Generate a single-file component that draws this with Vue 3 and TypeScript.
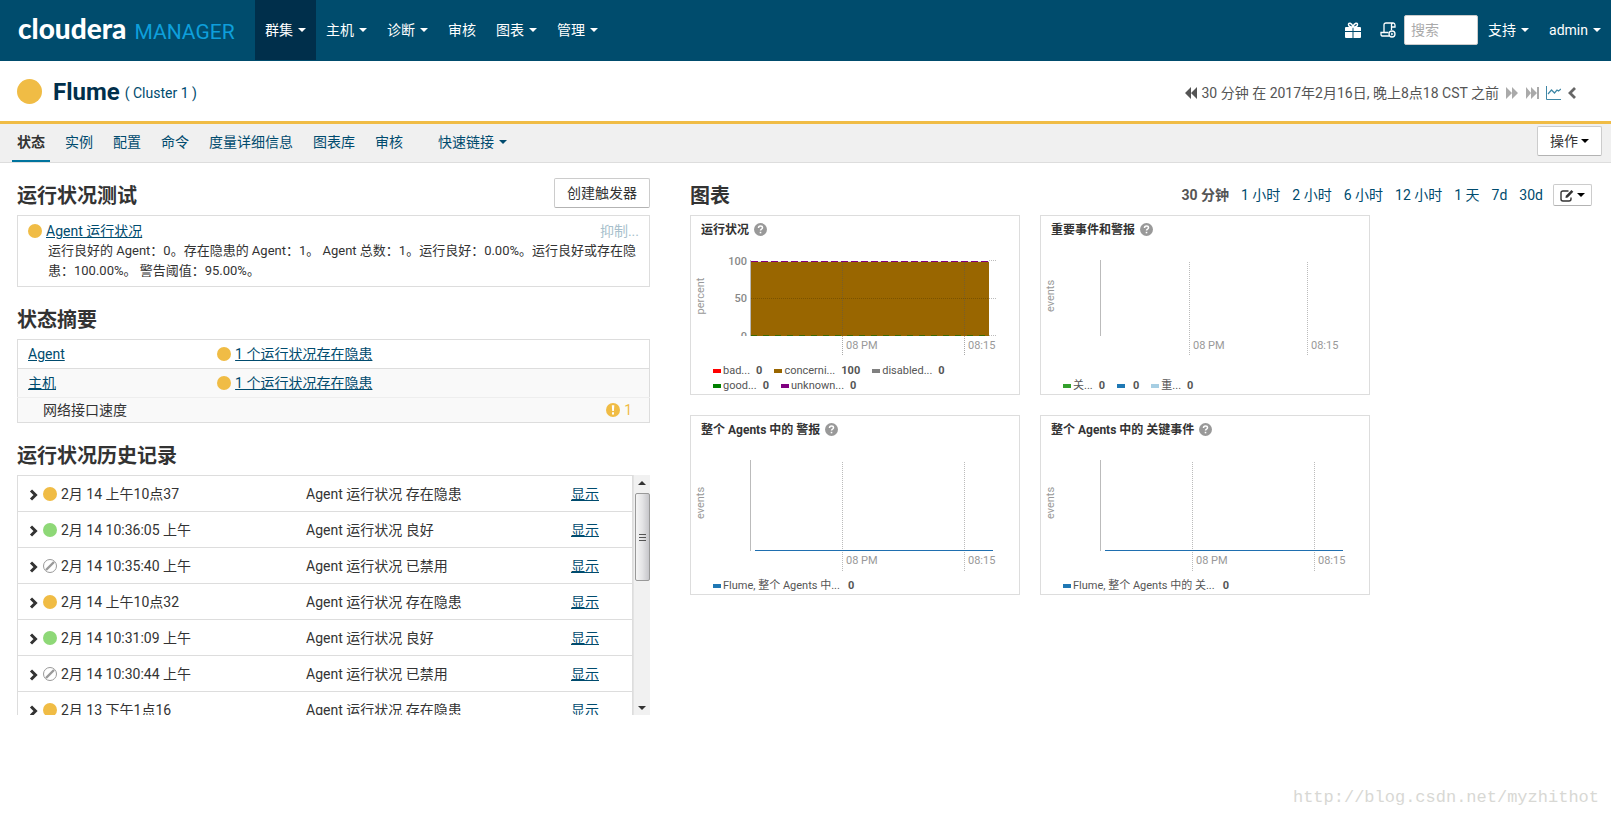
<script setup lang="ts">
interface NavItem { label: string; menu: boolean; active?: boolean }
interface HistoryRow { state: 'warn' | 'good' | 'off'; time: string; text: string }
interface Series { color: string; name: string; value: string }
interface Chart {
  title: string
  unit: string
  bottom: number
  ticks: [number, number]
  area: boolean
  line: boolean
  legend: Series[][]
}

const nav: NavItem[] = [
  { label: '群集', menu: true, active: true },
  { label: '主机', menu: true },
  { label: '诊断', menu: true },
  { label: '审核', menu: false },
  { label: '图表', menu: true },
  { label: '管理', menu: true },
]
const tabs: string[] = ['状态', '实例', '配置', '命令', '度量详细信息', '图表库', '审核']
const ranges: string[] = ['30 分钟', '1 小时', '2 小时', '6 小时', '12 小时', '1 天', '7d', '30d']
const summary: string[] = ['Agent', '主机']
const history: HistoryRow[] = [
  { state: 'warn', time: '2月 14 上午10点37', text: 'Agent 运行状况 存在隐患' },
  { state: 'good', time: '2月 14 10:36:05 上午', text: 'Agent 运行状况 良好' },
  { state: 'off', time: '2月 14 10:35:40 上午', text: 'Agent 运行状况 已禁用' },
  { state: 'warn', time: '2月 14 上午10点32', text: 'Agent 运行状况 存在隐患' },
  { state: 'good', time: '2月 14 10:31:09 上午', text: 'Agent 运行状况 良好' },
  { state: 'off', time: '2月 14 10:30:44 上午', text: 'Agent 运行状况 已禁用' },
  { state: 'warn', time: '2月 13 下午1点16', text: 'Agent 运行状况 存在隐患' },
]
const charts: Chart[] = [
  {
    title: '运行状况', unit: 'percent', bottom: 120, ticks: [152, 274], area: true, line: false,
    legend: [
      [
        { color: '#ff0000', name: 'bad...', value: '0' },
        { color: '#996600', name: 'concerni...', value: '100' },
        { color: '#808080', name: 'disabled...', value: '0' },
      ],
      [
        { color: '#008000', name: 'good...', value: '0' },
        { color: '#800080', name: 'unknown...', value: '0' },
      ],
    ],
  },
  {
    title: '重要事件和警报', unit: 'events', bottom: 120, ticks: [149, 267], area: false, line: false,
    legend: [[
      { color: '#33a02c', name: '关...', value: '0' },
      { color: '#1f78b4', name: '', value: '0' },
      { color: '#a6cee3', name: '重...', value: '0' },
    ]],
  },
  {
    title: '整个 Agents 中的 警报', unit: 'events', bottom: 135, ticks: [152, 274], area: false, line: true,
    legend: [[{ color: '#1f78b4', name: 'Flume, 整个 Agents 中...', value: '0' }]],
  },
  {
    title: '整个 Agents 中的 关键事件', unit: 'events', bottom: 135, ticks: [152, 274], area: false, line: true,
    legend: [[{ color: '#1f78b4', name: 'Flume, 整个 Agents 中的 关...', value: '0' }]],
  },
]
</script>

<template>
  <div class="page">
    <header class="topbar">
      <a href="#" class="logo"><span class="brand">cloudera</span><span class="product">MANAGER</span></a>
      <nav class="nav">
        <a v-for="n in nav" :key="n.label" href="#" class="nav-item" :class="{ active: n.active }">
          {{ n.label }}<i v-if="n.menu" class="caret"></i>
        </a>
      </nav>
      <div class="tools">
        <button class="icon-btn" aria-label="新增功能">
          <svg width="16" height="16" viewBox="0 0 16 16">
            <path d="M1 5h6.500v4H0V6q0-1 1-1zM8.500 5H15q1 0 1 1v3H8.500zM0 10h7.500v6H1q-1 0-1-1zM8.500 10H16v5q0 1-1 1H8.500z" fill="#fff" />
            <path d="M8 5C6 5 3.500 4.500 3.500 2.500S6.500.5 8 4.500C9.500.5 12.500.5 12.500 2.500S10 5 8 5z" fill="none" stroke="#fff" stroke-width="1.500" />
          </svg>
        </button>
        <button class="icon-btn" aria-label="运行命令">
          <svg width="16" height="16" viewBox="0 0 16 16" fill="none" stroke="#fff" stroke-width="1.300">
            <path d="M4 10.500V3q0-2 2-2h7.500M11.500 8V3q0-2 1.700-2T15 3v2h-3.500M9 14H3q-2 0-2-1.500v-2h7.500" />
            <circle cx="12" cy="12" r="3" />
            <path d="M11.200 10.500v3l2.300-1.500z" fill="#fff" stroke="none" />
          </svg>
        </button>
        <input class="search" type="text" placeholder="搜索" aria-label="搜索">
        <a href="#" class="nav-item">支持<i class="caret"></i></a>
        <a href="#" class="nav-item">admin<i class="caret"></i></a>
      </div>
    </header>

    <section class="titlebar">
      <span class="dot big"></span>
      <h1>Flume</h1>
      <a href="#" class="cluster">( Cluster 1 )</a>
      <div class="time">
        <button class="bare" aria-label="后退">
          <svg width="12" height="12" viewBox="0 0 12 12"><path d="M6 0v12L0 6zM12 0v12L6 6z" fill="#555" /></svg>
        </button>
        <span class="time-text">30 分钟 在 2017年2月16日, 晚上8点18 CST 之前</span>
        <button class="bare" aria-label="前进">
          <svg width="12" height="12" viewBox="0 0 12 12"><path d="M0 0v12l6-6zM6 0v12l6-6z" fill="#aaa" /></svg>
        </button>
        <button class="bare now" aria-label="现在">
          <svg width="13" height="12" viewBox="0 0 13 12"><path d="M0 0v12l5-6zM5 0v12l6-6zM11 0h2v12h-2z" fill="#aaa" /></svg>
        </button>
        <button class="bare" aria-label="图表">
          <svg width="15" height="14" viewBox="0 0 15 14" fill="none" stroke="#3f87a6"><path d="M.5 0v13.500H15" /><path d="M2 8l3.500-4 3 3 2.500-3 1.500 1L15 3" stroke-width="1.200" /></svg>
        </button>
        <button class="bare" aria-label="收起">
          <svg width="8" height="12" viewBox="0 0 8 12"><path d="M7 1L2 6l5 5" fill="none" stroke="#666" stroke-width="2.800" /></svg>
        </button>
      </div>
    </section>

    <section class="tabbar">
      <nav class="tabs">
        <a v-for="(t, i) in tabs" :key="t + i" href="#" class="tab" :class="{ on: i === 0 }">{{ t }}</a>
        <a href="#" class="tab quick">快速链接<i class="caret"></i></a>
      </nav>
      <button class="btn">操作<i class="caret dark"></i></button>
    </section>

    <main class="main">
      <div class="left">
        <div class="head">
          <h2>运行状况测试</h2>
          <button class="btn">创建触发器</button>
        </div>
        <div class="panel test">
          <div class="test-top">
            <span class="dot"></span><a href="#" class="link">Agent 运行状况</a>
            <a href="#" class="suppress">抑制...</a>
          </div>
          <p>运行良好的 Agent：0。存在隐患的 Agent：1。 Agent 总数：1。运行良好：0.00%。运行良好或存在隐患：100.00%。 警告阈值：95.00%。</p>
        </div>

        <div class="head"><h2>状态摘要</h2></div>
        <table class="panel summary">
          <tbody>
            <tr v-for="s in summary" :key="s">
              <td class="role"><a href="#" class="link">{{ s }}</a></td>
              <td><span class="cell"><span class="dot"></span><a href="#" class="link">1 个运行状况存在隐患</a></span></td>
            </tr>
            <tr class="sub">
              <td class="indent">网络接口速度</td>
              <td>
                <span class="cell alert">
                  <svg width="14" height="14" viewBox="0 0 14 14"><circle cx="7" cy="7" r="7" fill="#f0bc45" /><path d="M5.800 2.200h2.500L7.900 8H6.200zM6 9.200h2v2.200H6z" fill="#fff" /></svg>
                  1
                </span>
              </td>
            </tr>
          </tbody>
        </table>

        <div class="head"><h2>运行状况历史记录</h2></div>
        <div class="history">
          <div class="rows">
            <div v-for="(h, i) in history" :key="i" class="row">
              <button class="bare" aria-label="展开">
                <svg width="9" height="12" viewBox="0 0 9 12"><path d="M2 1.500L6.500 6 2 10.500" fill="none" stroke="#333" stroke-width="3" /></svg>
              </button>
              <svg v-if="h.state === 'off'" class="off" width="14" height="14" viewBox="0 0 14 14" fill="none" stroke="#999"><circle cx="7" cy="7" r="6.500" /><path d="M3 11l8-8" stroke-width="2.400" /></svg>
              <span v-else class="dot" :class="h.state"></span>
              <span class="when">{{ h.time }}</span>
              <span class="what">{{ h.text }}</span>
              <a href="#" class="link">显示</a>
            </div>
          </div>
          <div class="scroll" aria-hidden="true">
            <i class="arrow up"></i>
            <span class="thumb"><i></i><i></i><i></i></span>
            <i class="arrow down"></i>
          </div>
        </div>
      </div>

      <div class="right">
        <div class="head">
          <h2>图表</h2>
          <nav class="ranges">
            <a v-for="(r, i) in ranges" :key="r" href="#" :class="{ on: i === 0 }">{{ r }}</a>
            <button class="btn edit" aria-label="编辑">
              <svg width="14" height="13" viewBox="0 0 14 13" fill="none" stroke="#333"><path d="M8.500 2H3Q1 2 1 4v6q0 2 2 2h6q2 0 2-2V8.500" stroke-width="1.400" /><path d="M5.500 9l.3-2.300L11.500 1 13.300 2.800 7.800 8.500z" fill="#333" stroke="none" /></svg>
              <i class="caret dark"></i>
            </button>
          </nav>
        </div>
        <div class="charts">
          <article v-for="c in charts" :key="c.title" class="chart">
            <h3>{{ c.title }}
              <svg width="13" height="13" viewBox="0 0 13 13"><circle cx="6.500" cy="6.500" r="6.500" fill="#999" /><path d="M4.500 5q0-2 2-2t2 1.700q0 .8-1 1.400t-1 1.400" fill="none" stroke="#fff" stroke-width="1.500" /><path d="M5.700 8.800h1.600v1.500H5.700z" fill="#fff" /></svg>
            </h3>
            <svg class="plot" width="328" height="128" viewBox="1 30 328 128">
              <text class="unit" transform="rotate(-90)" :x="c.bottom === 120 ? -81 : -88" y="14" text-anchor="middle">{{ c.unit }}</text>
              <template v-if="c.area">
                <clipPath id="scale"><path d="M0 30h61v91H0z" /></clipPath>
                <g class="scale" text-anchor="end" clip-path="url(#scale)">
                  <text x="57" y="50">100</text><text x="57" y="87">50</text><text x="57" y="125">0</text>
                </g>
                <path d="M61 46h238v75H61z" fill="#960" />
                <path d="M299 45.500h7M299 83.500h7M299 120.500h7" class="grid" />
                <path d="M61 83.500h238" stroke="#7a5200" stroke-dasharray="1 1" />
                <path d="M61 120.500h238" stroke="#3a6b00" stroke-dasharray="6 6" />
                <path d="M61 46.500h238" stroke="#ddd" />
                <path d="M61 46.500h238" stroke="#800080" stroke-dasharray="7 3" />
              </template>
              <path :d="`M60.500 45V${c.bottom + 1}`" stroke="#bbb" />
              <g v-for="(x, i) in c.ticks" :key="x">
                <path :d="`M${x + 0.5} 47V${c.bottom + 21}`" class="grid" :class="{ over: c.area }" />
                <text class="tick" :x="x + 4" :y="c.bottom + 14">{{ i === 0 ? '08 PM' : '08:15' }}</text>
              </g>
              <path v-if="c.line" d="M65 135.500H303" stroke="#1f6fb0" />
            </svg>
            <div class="legend" :class="{ single: c.line }">
              <div v-for="(l, i) in c.legend" :key="i" class="legend-row">
                <span v-for="(s, j) in l" :key="j" class="series">
                  <i class="swatch" :style="{ background: s.color }"></i><span>{{ s.name }}</span><b>{{ s.value }}</b>
                </span>
              </div>
            </div>
          </article>
        </div>
      </div>
    </main>
    <div class="watermark">http://blog.csdn.net/myzhithot</div>
  </div>
</template>

<style>
body { margin: 0; background: #fff; }
</style>

<style scoped>
* { box-sizing: border-box; }
.page {
  position: relative;
  min-height: 100vh;
  font: 14px/20px Roboto, "Noto Sans CJK SC", sans-serif;
  color: #333;
}
a { color: #004b6e; text-decoration: none; }
button, input { font: inherit; color: inherit; margin: 0; }
button { cursor: pointer; }
h1, h2, h3, p { margin: 0; }
.caret {
  display: inline-block;
  border: 4px solid transparent;
  border-top-color: currentColor;
  border-bottom: 0;
  margin-left: 5px;
  vertical-align: 3px;
}
.caret.dark { margin-left: 3px; color: #000; }
.bare { display: flex; padding: 0; border: 0; background: none; }
.dot { flex: none; width: 14px; height: 14px; border-radius: 50%; background: #f0bc45; }
.dot.good { background: #8ed877; }
.dot.big { width: 25px; height: 25px; }
.link { text-decoration: underline; }
.btn {
  height: 30px;
  padding: 0 12px;
  border: 1px solid #bbb;
  border-color: #ccc #ccc #b3b3b3;
  border-radius: 2px;
  background: #fff;
  white-space: nowrap;
}

.topbar { display: flex; align-items: flex-start; height: 61px; background: #004c6d; }
.logo { display: flex; align-items: baseline; gap: 8px; flex: none; width: 255px; padding: 12px 0 0 18px; line-height: 32px; }
.brand { font-family: Lato, sans-serif; font-size: 28px; font-weight: 900; color: #fff; }
.product { font-size: 21px; color: #0e9fdb; }
.nav { display: flex; }
.nav-item { padding: 20px 10px; line-height: 20px; color: #fff; white-space: nowrap; }
.nav-item.active { background: #002f4b; }
.tools { display: flex; align-items: center; margin-left: auto; }
.icon-btn { display: flex; margin-right: 19px; padding: 0; border: 0; background: none; }
.icon-btn + .icon-btn { margin-right: 8px; }
.search { width: 74px; height: 30px; padding: 0 6px; border: 1px solid #ccc; border-radius: 2px; background: #fff; }
.search::placeholder { color: #aaa; opacity: 1; }

.titlebar { display: flex; align-items: center; height: 63px; padding: 0 35px 0 17px; border-bottom: 3px solid #f0bc45; }
h1 { margin-left: 11px; padding-top: 2px; font-size: 24px; font-weight: 700; line-height: 28px; color: #002f4b; }
.cluster { margin: 4px 0 0 5px; }
.time { display: flex; align-items: center; gap: 7px; margin-left: auto; padding-top: 4px; color: #555; }
.time-text { margin-left: -3px; }
.now { margin: 0 0 0 1px; }

.tabbar { display: flex; justify-content: space-between; align-items: flex-start; height: 39px; padding: 0 9px 0 12px; background: #f0f0f0; border-bottom: 1px solid #ddd; }
.tabbar .btn { margin-top: 2px; }
.tabs { display: flex; gap: 10px; }
.tab { padding: 8px 5px; border-bottom: 2px solid transparent; }
.tab.on { font-weight: 700; color: #333; border-color: #00749e; }
.quick { margin-left: 15px; }

.main { display: grid; grid-template-columns: 633fr 902fr; gap: 40px; padding: 12px 19px 0 17px; }
.left, .right { min-width: 0; }
.head { display: flex; align-items: center; justify-content: space-between; height: 40px; }
.head .btn { margin-bottom: 4px; }
h2 { padding-top: 2px; font-size: 20px; font-weight: 700; line-height: 24px; }
.panel { border: 1px solid #ddd; background: #fff; }
.test { padding: 5px 10px; margin-bottom: 12px; }
.test-top { display: flex; align-items: center; gap: 4px; }
.suppress { margin-left: auto; color: #a8bfcc; }
.test p { padding-left: 20px; font-size: 13px; }
.summary { width: 100%; border-collapse: collapse; margin-bottom: 12px; }
.summary td { height: 29px; padding: 0 10px; border-bottom: 1px solid #ddd; }
.summary tr + tr { background: #f9f9f9; }
.summary tr.sub td { height: 25px; }
.role { width: 30%; }
.summary tr:nth-child(2) td { border-bottom-color: #eee; }
.summary td.indent { padding-left: 25px; }
.cell { display: flex; align-items: center; gap: 4px; }
.alert { justify-content: flex-end; padding-right: 7px; color: #f0bc45; }

.history { display: flex; height: 240px; overflow: hidden; }
.rows { flex: 1; height: 253px; border: 1px solid #ddd; border-bottom: 0; }
.row { display: flex; align-items: center; height: 36px; padding: 0 33px 0 11px; border-bottom: 1px solid #ddd; }
.row .bare { margin-top: 2px; }
.row .dot, .row .off { flex: none; margin: 1px 4px 0 5px; }
.when { flex: 0 0 245px; }
.what { flex: 1; }
.scroll { display: flex; flex-direction: column; align-items: center; width: 17px; border-left: 1px solid #e3e3e3; background: #f1f1f1; }
.arrow { width: 0; border: 4px solid transparent; }
.arrow.up { margin-top: 3px; border-bottom-color: #333; border-top-width: 3px; }
.arrow.down { margin: auto 0 1px; border-top-color: #333; }
.thumb {
  display: flex;
  flex-direction: column;
  align-items: center;
  justify-content: center;
  gap: 2px;
  width: 15px;
  height: 88px;
  margin-top: 8px;
  border: 1px solid #999;
  border-radius: 2px;
  background: linear-gradient(90deg, #f5f5f5, #e3e3e5 50%, #c6c6ca);
}
.thumb i { width: 7px; height: 1px; background: #555; }

.ranges { display: flex; align-items: center; gap: 12px; white-space: nowrap; }
.ranges .on { font-weight: 700; color: #555; }
.ranges .edit { display: flex; align-items: center; height: 22px; margin: 0 0 0 -2px; padding: 0 6px; }
.charts { display: flex; flex-wrap: wrap; gap: 20px; }
.chart { display: flex; flex-direction: column; width: 330px; height: 180px; border: 1px solid #ddd; }
h3 { display: flex; align-items: center; gap: 5px; flex: none; height: 29px; padding: 0 10px 2px; font-size: 12px; font-weight: 700; line-height: 16px; }
.plot { display: block; flex: none; margin-bottom: -32px; }
.plot text { font-size: 11px; fill: #999; }
.plot .scale text { font-weight: 500; fill: #888; }
.grid { stroke: #bbb; stroke-dasharray: 1 1; }
.grid.over { stroke: #555; stroke-opacity: 0.5; }
.legend { margin-top: auto; padding: 0 0 1px 22px; font-size: 11px; line-height: 15px; color: #555; }
.legend-row { display: flex; gap: 12px; height: 15px; }
.series { display: flex; align-items: center; white-space: nowrap; }
.series b { margin-left: 6px; }
.single b { margin-left: 8px; }
.swatch { width: 8px; height: 4px; margin-right: 2px; }
.watermark { position: absolute; right: 12px; bottom: 9px; font: 17px/20px "Liberation Mono", monospace; color: #d8d8d4; }
</style>
